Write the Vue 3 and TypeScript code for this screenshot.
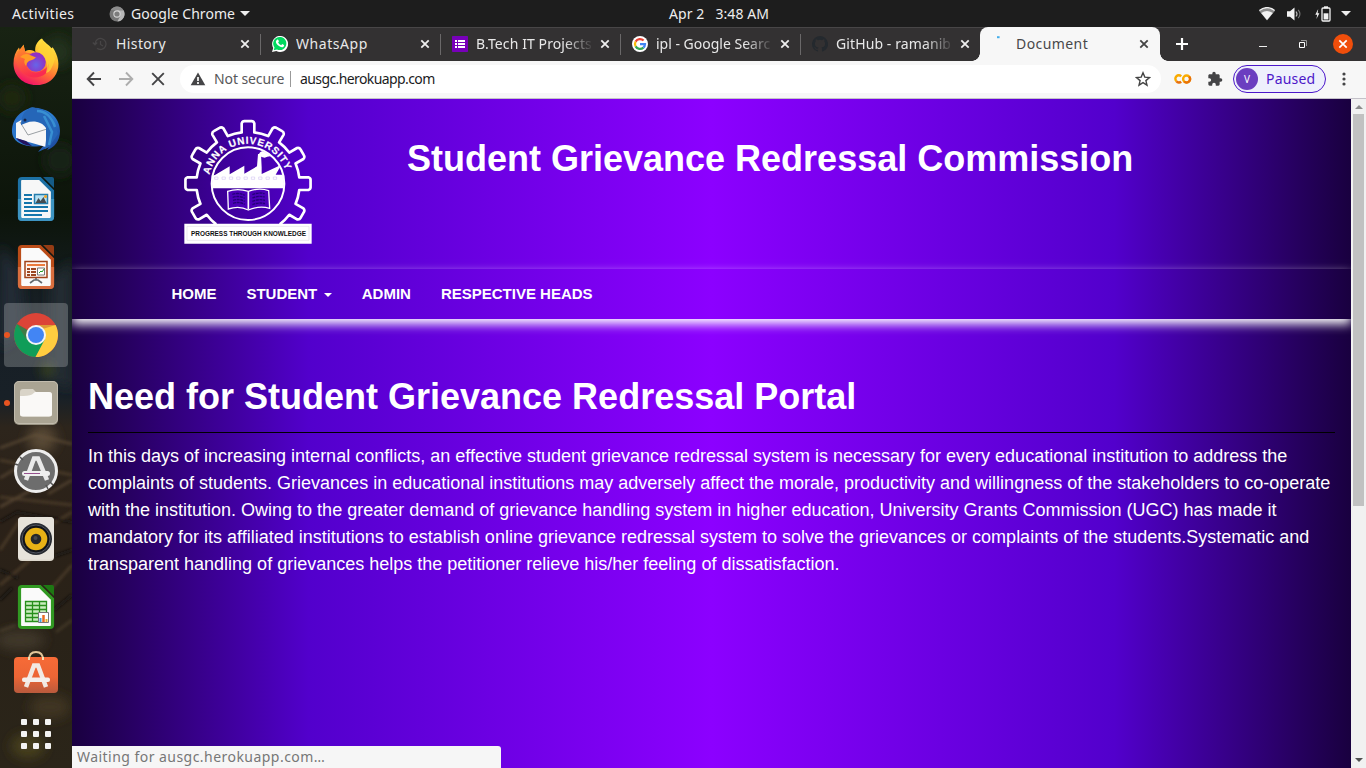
<script setup lang="ts">
interface Tab {
  id: string
  title: string
  active?: boolean
}

const tabs: Tab[] = [
  { id: 'history', title: 'History' },
  { id: 'whatsapp', title: 'WhatsApp' },
  { id: 'forms', title: 'B.Tech IT Projects' },
  { id: 'google', title: 'ipl - Google Searc' },
  { id: 'github', title: 'GitHub - ramanib' },
  { id: 'document', title: 'Document', active: true },
]

const navItems = [
  { label: 'HOME', menu: false },
  { label: 'STUDENT', menu: true },
  { label: 'ADMIN', menu: false },
  { label: 'RESPECTIVE HEADS', menu: false },
]

// Nine gear teeth, one every 30 degrees, open at the bottom where the banner sits.
function gearPath(): string {
  const pt = (r: number, deg: number) => {
    const a = (deg * Math.PI) / 180
    return `${(234 + r * Math.cos(a)).toFixed(1)} ${(236 + r * Math.sin(a)).toFixed(1)}`
  }
  let d = `M${pt(155, -232)}`
  for (let k = -7; k <= 1; k++) {
    const c = k * 30
    d += ` A155 155 0 0 1 ${pt(155, c - 7)} L${pt(182, c - 6)} Q${pt(189, c - 5)} ${pt(188, c - 3)}`
    d += ` L${pt(188, c + 3)} Q${pt(189, c + 5)} ${pt(182, c + 6)} L${pt(155, c + 7)}`
  }
  return d + ` A155 155 0 0 1 ${pt(155, 52)}`
}
const gear = gearPath()

const gridDots = [0, 1, 2, 3, 4, 5, 6, 7, 8].map((i) => ({
  x: 21 + (i % 3) * 12,
  y: 10 + Math.floor(i / 3) * 12,
}))
</script>

<template>
  <div class="desktop">
    <header class="topbar">
      <span class="activities">Activities</span>
      <span class="appmenu">
        <svg width="16" height="16" viewBox="0 0 16 16">
          <circle cx="8" cy="8" r="7.5" fill="#777" />
          <path d="M8 4.2h6.6A7.5 7.5 0 0 1 8.4 15.5L11.3 10z" fill="#b8b8b8" />
          <path d="M1.7 4A7.5 7.5 0 0 1 14.5 4.3H8z" fill="#8d8d8d" />
          <circle cx="8" cy="8" r="3.7" fill="#d5d5d5" />
          <circle cx="8" cy="8" r="2.6" fill="#7c7c7c" />
        </svg>
        <span class="appname">Google Chrome</span>
        <i class="tri"></i>
      </span>
      <span class="clock">Apr 2&nbsp;&nbsp; 3:48 AM</span>
      <span class="tray">
        <svg width="16" height="14" viewBox="0 0 16 14">
          <path d="M0 3.8Q8-2.7 16 3.8L8 13.5z" fill="#8d8d8d" />
          <path d="M.3 3.5Q8-2.3 15.7 3.5" fill="none" stroke="#f2f2f2" stroke-width="1.3" />
          <path d="M2.2 6Q8 1.8 13.8 6L8 13z" fill="#f2f2f2" />
        </svg>
        <svg width="16" height="14" viewBox="0 0 16 14">
          <path d="M0 4.3h3L7.5.5v13L3 9.7H0z" fill="#f2f2f2" />
          <path d="M9 4.5q2 2.5 0 5" fill="none" stroke="#bbb" stroke-width="1.2" />
          <path d="M11.2 2.8q3.5 4.2 0 8.4" fill="none" stroke="#777" stroke-width="1.1" />
        </svg>
        <svg width="16" height="16" viewBox="0 0 16 16">
          <path d="M3.2 3 .3 8.8h1.9L1.4 13l3-5.8H2.6z" fill="#f2f2f2" />
          <path d="M9 .3h4v2H9z" fill="#f2f2f2" />
          <rect x="7" y="2" width="8" height="13" rx="1" fill="none" stroke="#f2f2f2" stroke-width="1.3" />
          <path d="M8.600 7.300h4.800v6.200H8.600z" fill="#f2f2f2" />
        </svg>
        <i class="tri"></i>
      </span>
    </header>

    <div class="workspace">
      <aside class="dock">
        <svg class="wallpaper" width="72" height="741" viewBox="0 27 72 741">
          <defs>
            <linearGradient id="wp" x1="0" y1="0" x2="0" y2="1">
              <stop offset="0" stop-color="#182313" />
              <stop offset=".25" stop-color="#0c140a" />
              <stop offset=".38" stop-color="#171f25" />
              <stop offset=".5" stop-color="#182027" />
              <stop offset=".54" stop-color="#2d251c" />
              <stop offset=".66" stop-color="#2b2118" />
              <stop offset=".82" stop-color="#292218" />
              <stop offset="1" stop-color="#2b2519" />
            </linearGradient>
            <filter id="soft" x="-50%" y="-50%" width="200%" height="200%"><feGaussianBlur stdDeviation="6" /></filter>
            <filter id="fine" x="-50%" y="-50%" width="200%" height="200%"><feGaussianBlur stdDeviation="1.8" /></filter>
          </defs>
          <path fill="url(#wp)" d="M0 27h72v741H0z" />
          <g filter="url(#soft)">
            <circle cx="58" cy="52" r="15" fill="#22301a" />
            <circle cx="12" cy="98" r="14" fill="#1a2711" />
            <circle cx="60" cy="160" r="16" fill="#182412" />
            <path d="M0 245 20 270 25 330 0 350z" fill="#222c34" />
            <path d="M50 280 72 260V390L48 380z" fill="#202a32" />
            <circle cx="47" cy="370" r="6" fill="#414c16" />
            <circle cx="42" cy="439" r="14" fill="#594936" />
            <ellipse cx="20" cy="640" rx="25" ry="10" fill="#40382a" />
            <ellipse cx="50" cy="707" rx="20" ry="12" fill="#413622" />
            <ellipse cx="28" cy="746" rx="17" ry="12" fill="#46401d" />
          </g>
          <g filter="url(#fine)" fill="none" stroke-width="2.600">
            <path d="M0 448 35 435 72 444M0 478 22 465M48 494 72 480M0 507 35 488" stroke="#65523c" opacity=".65" />
            <path d="M0 460 72 475M0 497 72 505M0 550 20 520M54 523 72 512M0 585 30 560M50 590 72 565" stroke="#594630" opacity=".7" />
            <path d="M0 522 17 512 72 522M55 556 72 550M0 570 18 578M0 600 12 588M54 610 72 595" stroke="#110f0e" opacity=".8" />
            <path d="M0 631 16 625M56 632 72 620" stroke="#6a5b3b" opacity=".4" />
          </g>
        </svg>

        <div class="launcher">
          <svg width="72" height="68" viewBox="0 0 72 68">
            <defs>
              <linearGradient id="ffo" x1=".8" y1="0" x2=".3" y2="1">
                <stop offset="0" stop-color="#fff24a" /><stop offset=".35" stop-color="#ffbd2f" />
                <stop offset=".65" stop-color="#ff6b35" /><stop offset="1" stop-color="#f20b6c" />
              </linearGradient>
              <linearGradient id="ffr" x1="0" y1="0" x2=".3" y2="1">
                <stop offset="0" stop-color="#ff9424" /><stop offset="1" stop-color="#fa2b50" />
              </linearGradient>
              <radialGradient id="ffp" cx=".5" cy=".65"><stop offset="0" stop-color="#6566e8" /><stop offset="1" stop-color="#9131c5" /></radialGradient>
            </defs>
            <path d="M42 9.500c2.400 4.200 6.400 5.600 9.500 9.800l1.200-1.100c5.200 7.500 8 18.400 3.500 26.500C52 52.500 45 56.200 36 56 23 56 13.500 46.500 13.500 34.500 13.500 28 15.500 22.500 19 18.500L20 22l3.500-6.500 1.500 7C29 20 34 21 35.500 23.500 34 17 38 11 42 9.500z" fill="url(#ffo)" />
            <path d="M17.500 23 23.500 16l2 7.500C29 24 35 25 36 28L31.500 31c-3 2-5.500 3-4.500 6 1 6 9 8 14 5 5-2 7-5 8-8 1 13-12 17-21 13-9-3-13-13-10.500-24z" fill="url(#ffr)" />
            <circle cx="36" cy="33" r="9.800" fill="url(#ffp)" />
            <path d="M20 28q5-5 10-2l6 2.500q-2 2-7 3.500-3 2-3 5-3-4-1-7z" fill="#ff9c25" />
            <path d="M37 22q5-6 5-12 2 5 9 10l4 10q-4 14-9 14Q50 29 37 22z" fill="#ffd436" opacity=".75" />
          </svg>
        </div>

        <div class="launcher">
          <svg width="72" height="68" viewBox="0 0 72 68">
            <defs><linearGradient id="tb" x1="0" y1="0" x2="1" y2="1"><stop offset="0" stop-color="#2869c4" /><stop offset=".5" stop-color="#2d7fd2" /><stop offset="1" stop-color="#183d91" /></linearGradient></defs>
            <path d="M29 11.500Q33 9 37 12C50 11 60 22 60 34c0 10-6 17-13 19l2-3-11 5 6-7C32 52 15 48 12.500 38 10 26 18 15 29 11.500z" fill="url(#tb)" />
            <path d="M16 26 23 22 46 26 49 33 46 50 25 44 16 41z" fill="#f7f7f7" />
            <path d="m20 25 8 13 19-6" fill="none" stroke="#9aa0a4" />
            <path d="M21 28c0-8 3-15 10-17 12-2 22 6 24 17l3 9-9 13-4 2 1-9V31c-4-6-12-8-20-5z" fill="#2566b8" />
            <path d="M37 14c9 0 15 7 18 16M44 19l8 16-3 13" fill="none" stroke="#388fd2" stroke-width="2.500" />
            <path d="m16 41 10 3 6 5q-11-1-16-8z" fill="#23135f" />
            <circle cx="25" cy="23" r="1.500" fill="#172447" />
          </svg>
        </div>

        <div class="launcher">
          <svg width="72" height="68" viewBox="0 0 72 68">
            <path d="M43 12h9q2 0 2 2v9z" fill="#155b87" />
            <path d="M22 13.500h18l12.500 12.500v26q0 2.500-2.500 2.500H22q-2.500 0-2.500-2.500V16q0-2.500 2.500-2.500z" fill="#f7f7f7" stroke="#1d71a5" stroke-width="3.200" />
            <path d="M19.500 34v18q0 2.500 2.500 2.500h28q2.500 0 2.500-2.500V34" fill="none" stroke="#3d94c2" stroke-width="3.200" />
            <path d="M24 30h8m-8 4h8m-8 4h8m-8 4h24m-24 4h24m-24 4h18" stroke="#1476ac" stroke-width="2" />
            <path d="M34.500 29.500h13v9h-13z" fill="#b5e1f4" stroke="#257dac" stroke-width="1.500" />
            <path d="m35.500 38 3-5 2 3 3-4 3 6z" fill="#454c50" /><circle cx="45.500" cy="31.500" r="1.500" fill="#f0a324" />
          </svg>
        </div>

        <div class="launcher">
          <svg width="72" height="68" viewBox="0 0 72 68">
            <path d="M43 12h9q2 0 2 2v9z" fill="#963c14" />
            <path d="M22 13.500h18l12.500 12.500v26q0 2.500-2.500 2.500H22q-2.500 0-2.500-2.500V16q0-2.500 2.500-2.500z" fill="#fafafa" stroke="#bb4c18" stroke-width="3.200" />
            <path d="M19.500 34v18q0 2.500 2.500 2.500h28q2.500 0 2.500-2.500V34" fill="none" stroke="#d96e3e" stroke-width="3.200" />
            <path d="M25 28.500h22v16H25z" fill="#fff5ef" stroke="#a24319" stroke-width="1.500" />
            <path d="M27 32h18" stroke="#ec7b3d" stroke-width="2" />
            <path d="M27 36h3m1 0h5m-9 3h3m1 0h5m-9 3h3m1 0h5" stroke="#9c4722" stroke-width="2" />
            <path d="M37.500 35h7v7h-7z" fill="#fff" stroke="#777" /><path d="m39 40 2-2 1 1 2-3" stroke="#249a24" fill="none" />
            <path d="M36 45v2m-6 3 4-3h4l4 3" stroke="#62686c" stroke-width="1.700" fill="none" />
          </svg>
        </div>

        <div class="launcher selected running">
          <svg width="72" height="68" viewBox="0 0 72 68">
            <circle cx="36" cy="34" r="22" fill="#dc4437" />
            <path d="M17 23A22 22 0 0 0 35.500 56L46 38.500 36 34z" fill="#109d58" />
            <path d="M36 24h19.600A22 22 0 0 1 35.500 56L45 38z" fill="#ffcd40" />
            <path d="M17 22.700 26 38l2-9zM36 24h19.600l-13 4z" fill="#9d3c25" opacity=".35" />
            <circle cx="36" cy="34" r="10" fill="#f4f4f4" /><circle cx="36" cy="34" r="8" fill="#4285f4" />
          </svg>
        </div>

        <div class="launcher running">
          <svg width="72" height="68" viewBox="0 0 72 68">
            <rect x="14" y="12" width="44" height="44" rx="5" fill="#999382" />
            <rect x="14.500" y="12.500" width="43" height="42" rx="4.500" fill="#aaa493" stroke="#c2bcae" />
            <path d="M20 23q0-3 3-3h10l3 3h13q3 0 3 3v19q0 2.500-3 2.500H23q-3 0-3-2.500z" fill="#d9d4c8" />
            <path d="M20 27q8 0 12-1.500l3-2.500h14q3 0 3 3v19q0 2.500-3 2.500H23q-3 0-3-2.500z" fill="#faf9f7" />
          </svg>
        </div>

        <div class="launcher">
          <svg width="72" height="68" viewBox="0 0 72 68">
            <circle cx="36" cy="34" r="20.500" fill="#6d6d6d" stroke="#eee" stroke-width="3" />
            <path d="m20 20 3 3m-8 4 3 1m32 17 3 3m-7 0 2 4" stroke="#555" stroke-width="1.500" />
            <path d="M26 43 34 21.500h4L47 43" fill="none" stroke="#e9e9e9" stroke-width="4.500" />
            <rect x="22" y="34" width="28" height="5" rx="2.500" fill="#efefef" /><path d="M24 36.500h16" stroke="#95508d" />
          </svg>
        </div>

        <div class="launcher">
          <svg width="72" height="68" viewBox="0 0 72 68">
            <rect x="18" y="12" width="36" height="44" rx="4" fill="#ded9ce" />
            <rect x="18" y="12" width="36" height="42.500" rx="4" fill="#e7e3db" />
            <circle cx="36" cy="34" r="16" fill="#272a31" /><circle cx="36" cy="34" r="14" fill="#111319" stroke="#515561" />
            <circle cx="36" cy="34" r="11.300" fill="#e8b116" /><circle cx="36" cy="34" r="5.300" fill="#25262b" /><circle cx="35.500" cy="33" r="2" fill="#45474c" />
          </svg>
        </div>

        <div class="launcher">
          <svg width="72" height="68" viewBox="0 0 72 68">
            <path d="M43 12h9q2 0 2 2v9z" fill="#1e7813" />
            <path d="M22 13.500h18l12.500 12.500v26q0 2.500-2.500 2.500H22q-2.500 0-2.500-2.500V16q0-2.500 2.500-2.500z" fill="#fafafa" stroke="#319922" stroke-width="3.200" />
            <path d="M25.500 28.500h21v20h-21zm0 4h21m-21 4h21m-21 4h21m-21 4h21m-14-16v20m7-20v20" fill="#c8edbc" stroke="#278f1b" stroke-width="1.300" />
            <path d="M38.500 39.500h10v10h-10z" fill="#fff" stroke="#777" /><path d="M40.500 49v-4" stroke="#42a0e0" stroke-width="2" /><path d="M43.500 49v-7" stroke="#e96c22" stroke-width="2.500" /><path d="M46.500 49v-3" stroke="#e4b52b" stroke-width="2" />
          </svg>
        </div>

        <div class="launcher">
          <svg width="72" height="68" viewBox="0 0 72 68">
            <defs><linearGradient id="store" x1="0" y1="0" x2="0" y2="1"><stop offset="0" stop-color="#f76b37" /><stop offset=".55" stop-color="#ec6535" /><stop offset="1" stop-color="#b95a3d" /></linearGradient></defs>
            <path d="M29 19q0-8 7-8t7 8" fill="none" stroke="#e2c69a" stroke-width="2" />
            <rect x="14" y="16" width="44" height="36" rx="4" fill="url(#store)" />
            <path d="M29 16v3m14-3v3" stroke="#f4dfb3" stroke-width="2" />
            <path d="M26 46 34 24.500h4L46 46" fill="none" stroke="#f1e9e3" stroke-width="4.500" />
            <rect x="22" y="36.500" width="28" height="4.500" rx="2" fill="#f5efeb" />
          </svg>
        </div>

        <div class="launcher grid-launcher">
          <svg width="72" height="59" viewBox="0 0 72 59">
            <rect v-for="(d, i) in gridDots" :key="i" :x="d.x" :y="d.y" width="6" height="6" rx="1" fill="#f4f4f2" />
          </svg>
        </div>
      </aside>

      <section class="window">
        <div class="tabstrip">
          <div v-for="tab in tabs" :key="tab.id" class="tab" :class="[tab.id, { active: tab.active }]">
            <svg class="favicon" width="16" height="16" viewBox="0 0 16 16">
              <g v-if="tab.id === 'history'" fill="none" stroke="#474546" stroke-width="1.300">
                <path d="M3 8a5.500 5.500 0 1 1 2 4.200M.8 6.500 3 8.800l2.200-2.300M8.500 5v3.500l2.500 1.500" />
              </g>
              <g v-else-if="tab.id === 'whatsapp'">
                <path d="M0 16 1.200 12A8 8 0 1 1 4.300 15z" fill="#fff" />
                <path d="m1.700 14.300.8-2.800A6.600 6.600 0 1 1 5 13.500z" fill="#00d95f" />
                <path d="M5 3.800c.6-.5 1.200-.3 1.400.3l.5 1.300-.8 1q1 2 3.100 2.900l1-1.200 1.800.9c.4.200 0 1.800-1.300 2.200C8 12 3 7.300 4 5z" fill="#fff" />
              </g>
              <g v-else-if="tab.id === 'forms'">
                <rect width="16" height="16" rx=".7" fill="#7800b9" />
                <path d="M3 5h2m1 0h7M3 8h2m1 0h7M3 11h2m1 0h7" stroke="#fff" stroke-width="2" />
              </g>
              <g v-else-if="tab.id === 'google'">
                <circle cx="8" cy="8" r="8" fill="#fff" />
                <g fill="none" stroke-width="2.200">
                  <path d="M11.600 4.600A5 5 0 0 0 3.600 5.600" stroke="#ea4335" />
                  <path d="M3.600 5.600A5 5 0 0 0 3.600 10.400" stroke="#fbbc05" />
                  <path d="M3.600 10.400A5 5 0 0 0 11.400 11.600" stroke="#34a853" />
                  <path d="M11.400 11.600A5 5 0 0 0 13 8.100H8" stroke="#4285f4" />
                </g>
              </g>
              <path v-else-if="tab.id === 'github'" fill="#24292e" d="M8 0a8 8 0 0 0-2.530 15.590c.4.070.55-.17.55-.38v-1.490c-2.230.48-2.700-.94-2.700-.94-.36-.92-.89-1.170-.89-1.170-.73-.5.050-.49.050-.49.800.06 1.230.83 1.230.83.710 1.220 1.870.87 2.330.66.070-.52.280-.87.500-1.070-1.770-.2-3.640-.89-3.640-3.950 0-.87.310-1.590.82-2.150-.08-.2-.36-1.020.08-2.120 0 0 .67-.21 2.200.82a7.600 7.600 0 0 1 4 0c1.530-1.040 2.200-.82 2.200-.82.440 1.100.16 1.920.08 2.120.51.560.82 1.270.82 2.150 0 3.070-1.870 3.750-3.650 3.950.290.250.540.730.540 1.480v2.200c0 .210.150.460.550.380A8 8 0 0 0 8 0z" />
              <path v-else d="M5 1.200h2.600" stroke="#45aeea" stroke-width="2" />
            </svg>
            <span class="title">{{ tab.title }}</span>
            <svg class="close" width="10" height="10" viewBox="0 0 10 10"><path d="m1.300 1.300 7.400 7.400m0-7.400L1.300 8.700" /></svg>
          </div>
          <svg class="newtab" width="14" height="14" viewBox="0 0 14 14"><path d="M7 1v12M1 7h12" stroke="#fff" stroke-width="2.200" /></svg>
          <div class="winbuttons">
            <svg width="10" height="10" viewBox="0 0 10 10"><path d="M1 7.500h8" stroke="#eee" /></svg>
            <svg width="10" height="10" viewBox="0 0 10 10" fill="none"><path d="M3 1.500h5.500V7" stroke="#999" /><path d="M1.500 3.500h5v5h-5z" stroke="#fff" /></svg>
            <span class="winclose"><svg width="10" height="10" viewBox="0 0 10 10"><path d="m1.300 1.300 7.400 7.400m0-7.400L1.300 8.700" stroke="#fff" stroke-width="1.700" /></svg></span>
          </div>
        </div>

        <div class="toolbar">
          <div class="navbuttons">
            <svg width="16" height="16" viewBox="0 0 16 16" fill="none" stroke="#434345" stroke-width="1.900"><path d="M15 8H2M8 1.500 1.700 8 8 14.500" /></svg>
            <svg width="16" height="16" viewBox="0 0 16 16" fill="none" stroke="#adadad" stroke-width="1.900"><path d="M1 8h13M8 1.500 14.300 8 8 14.500" /></svg>
            <svg width="16" height="16" viewBox="0 0 16 16" fill="none" stroke="#434345" stroke-width="1.900"><path d="m2.200 2.200 11.600 11.600m0-11.600L2.200 13.800" /></svg>
          </div>
          <div class="omnibox">
            <svg width="16" height="14" viewBox="0 0 16 14"><path d="M8 .5 15.300 13.300H.7z" fill="#454547" /><path d="M8 5v4m0 1v2" stroke="#fff" stroke-width="1.700" /></svg>
            <span class="insecure">Not secure</span>
            <i class="bar"></i>
            <span class="url">ausgc.herokuapp.com</span>
            <svg class="star" width="16" height="16" viewBox="0 0 16 16"><path d="m8 1.800 1.800 4.300 4.700.4-3.600 3.100 1.100 4.600-4-2.500-4 2.500 1.100-4.600-3.600-3.100 4.700-.4z" fill="none" stroke="#444" stroke-width="1.400" /></svg>
          </div>
          <svg class="colab" width="18" height="12" viewBox="0 0 18 12" fill="none" stroke-width="2.400">
            <path d="M7.200 3.300A3.400 3.400 0 0 0 2.400 8.200" stroke="#f9ab00" /><path d="M2.400 8.200A3.400 3.400 0 0 0 7.200 8.700" stroke="#e8710a" />
            <circle cx="12.600" cy="6" r="3.500" stroke="#f9ab00" /><path d="M10.100 8.500A3.500 3.500 0 0 0 15.100 3.500" stroke="#e8710a" />
          </svg>
          <svg class="puzzle" width="16" height="16" viewBox="0 0 24 24"><path fill="#444446" d="M20.500 11H19V7c0-1.100-.9-2-2-2h-4V3.500a2.500 2.500 0 0 0-5 0V5H4c-1.100 0-2 .9-2 2v3.800h1.500a2.700 2.700 0 0 1 0 5.400H2V20c0 1.100.9 2 2 2h3.800v-1.500a2.700 2.700 0 0 1 5.400 0V22H17c1.100 0 2-.9 2-2v-4h1.500a2.500 2.500 0 0 0 0-5z" /></svg>
          <div class="profile"><span class="avatar">V</span><span class="paused">Paused</span></div>
          <svg class="kebab" width="4" height="16" viewBox="0 0 4 16" fill="#444446"><circle cx="2" cy="3" r="1.600" /><circle cx="2" cy="8" r="1.600" /><circle cx="2" cy="13" r="1.600" /></svg>
        </div>

        <div class="viewport">
          <main class="page">
            <div class="masthead">
              <svg class="crest" width="160" height="150" viewBox="0 0 480 450">
                <defs>
                  <path id="arc" d="M118 209A119 119 0 0 1 350 209" />
                  <clipPath id="disc"><circle cx="234" cy="236" r="108" /></clipPath>
                </defs>
                <path :d="gear" fill="none" stroke="#fff" stroke-width="8" stroke-linejoin="round" />
                <circle cx="234" cy="236" r="109" fill="none" stroke="#fff" stroke-width="6" />
                <text class="crest-name"><textPath href="#arc" textLength="306" lengthAdjust="spacing">ANNA UNIVERSITY</textPath></text>
                <g clip-path="url(#disc)">
                  <path d="M120 250V212l15-2 44-26v24l44-26v24l38-22 3-37h9l2 40v20l59-28-17 30h40v41z" fill="#fff" />
                  <path d="M266 150q3-12 15-12 12 6 25 4 8 5 0 12-12-2-22 4-9 0-18-8z" fill="#fff" />
                  <path d="M134 216h10v7h-10zm22 0h10v7h-10zm22 0h10v7h-10zm22 0h10v7h-10zm22 0h10v7h-10zm22 0h10v7h-10zm22 0h10v7h-10zm22 0h10v7h-10zm22 0h10v7h-10z" fill="none" stroke="#c9b8ef" stroke-width="1.500" />
                </g>
                <path d="M173 259q30-10 62 0 33-12 61-2l3 53q-31-9-64 5-27-14-60-3z" fill="#4c00b8" stroke="#fff" stroke-width="4" />
                <path d="M235 260v53" stroke="#fff" stroke-width="5" />
                <path d="M187 268q20-6 37 3M188 277q19-6 36 3M189 286q18-6 35 3M189 295q18-6 35 3M247 269q19-8 37-3M247 279q19-8 37-3M247 289q19-8 38-3M247 299q19-8 38-3" stroke="#240078" stroke-width="4" fill="none" stroke-dasharray="9 2" />
                <path d="M43 356h382v60H43z" fill="#fff" />
                <path d="M51 364h366v42H51z" fill="none" stroke="#d6d2df" stroke-width="1.500" />
                <text class="crest-motto" x="63" y="394" textLength="345" lengthAdjust="spacingAndGlyphs">PROGRESS THROUGH KNOWLEDGE</text>
              </svg>
              <h1>Student Grievance Redressal Commission</h1>
            </div>
            <nav class="menu">
              <a v-for="item in navItems" :key="item.label">{{ item.label }}<i v-if="item.menu" class="caret"></i></a>
            </nav>
            <article>
              <h2>Need for Student Grievance Redressal Portal</h2>
              <hr />
              <p>In this days of increasing internal conflicts, an effective student grievance redressal system is necessary for every educational institution to address the complaints of students. Grievances in educational institutions may adversely affect the morale, productivity and willingness of the stakeholders to co-operate with the institution. Owing to the greater demand of grievance handling system in higher education, University Grants Commission (UGC) has made it mandatory for its affiliated institutions to establish online grievance redressal system to solve the grievances or complaints of the students.Systematic and transparent handling of grievances helps the petitioner relieve his/her feeling of dissatisfaction.</p>
            </article>
          </main>
          <div class="scrollbar">
            <i class="up"></i>
            <span class="thumb"></span>
            <i class="down"></i>
          </div>
          <div class="status">Waiting for ausgc.herokuapp.com…</div>
        </div>
      </section>
    </div>
  </div>
</template>

<style>
html,
body {
  margin: 0;
  overflow: hidden;
}
</style>

<style scoped>
.desktop {
  width: 1366px;
  height: 768px;
  display: flex;
  flex-direction: column;
  overflow: hidden;
  background: #1d1d1d;
  font-family: "Noto Sans", "Open Sans", sans-serif;
  font-size: 14px;
}
svg { display: block; flex: none; }
.topbar {
  height: 27px;
  flex: none;
  display: grid;
  grid-template-columns: 109px 560px 110px 1fr;
  align-items: center;
  color: #eee;
  line-height: 26px;
  white-space: nowrap;
}
.activities { padding-left: 12px; letter-spacing: .4px; }
.appmenu { display: flex; align-items: center; }
.appname { margin: 0 5px 0 6px; letter-spacing: .05px; }
.tri { border: 5px solid transparent; border-top: 5px solid #eee; border-bottom: 0; }
.clock { letter-spacing: .07px; }
.tray { display: flex; align-items: center; justify-content: flex-end; padding-right: 15px; }
.tray svg { margin-right: 12px; }
.tray svg:nth-child(3) { margin-right: 10px; }

.workspace { flex: 1; display: flex; min-height: 0; }
.dock {
  width: 72px;
  flex: none;
  position: relative;
  padding-top: 2px;
  box-sizing: border-box;
  overflow: hidden;
}
.wallpaper { position: absolute; left: 0; top: 0; }
.launcher { position: relative; height: 68px; }
.selected::before {
  content: "";
  position: absolute;
  left: 4px;
  top: 2px;
  width: 64px;
  height: 64px;
  border-radius: 4px;
  background: rgba(255, 255, 255, .22);
}
.launcher svg { position: relative; }
.running::after {
  content: "";
  position: absolute;
  left: 4px;
  top: 31px;
  width: 6px;
  height: 6px;
  border-radius: 50%;
  background: #e95420;
}
.grid-launcher { height: 59px; }

.window { flex: 1; min-width: 0; display: flex; flex-direction: column; }
.tabstrip {
  height: 34px;
  flex: none;
  display: flex;
  align-items: center;
  padding-left: 8px;
  box-sizing: border-box;
  background: #333132;
  border-top: 1px solid #484647;
}
.tab {
  width: 180px;
  height: 34px;
  margin-top: -1px;
  flex: none;
  display: flex;
  align-items: center;
  box-sizing: border-box;
  padding-left: 12px;
  position: relative;
  color: #e8e8e8;
}
.tab::after {
  content: "";
  position: absolute;
  right: -1px;
  top: 7px;
  width: 1px;
  height: 21px;
  background: #6a6869;
}
.github::after { display: none; }
.title {
  width: 118px;
  margin-left: 8px;
  overflow: hidden;
  white-space: nowrap;
  line-height: 20px;
  letter-spacing: .1px;
}
.history .title { letter-spacing: .4px; }
.whatsapp .title { letter-spacing: .55px; }
.document .title { letter-spacing: .42px; }
.google .title { letter-spacing: 0; }
.forms .title, .google .title, .github .title {
  -webkit-mask-image: linear-gradient(to right, #000 75%, transparent);
  mask-image: linear-gradient(to right, #000 75%, transparent);
}
.close { margin-left: 6px; stroke: #eee; stroke-width: 1.8; }
.active { background: #f7f7f7; color: #48484a; border-radius: 8px 8px 0 0; }
.active .close { stroke: #444; margin-left: 5px; }
.tab.active::after {
  right: -8px;
  top: auto;
  bottom: 0;
  width: 8px;
  height: 8px;
  background: radial-gradient(circle at 100% 0, transparent 7.5px, #f7f7f7 8px);
}
.active::before {
  content: "";
  position: absolute;
  left: -8px;
  bottom: 0;
  width: 8px;
  height: 8px;
  background: radial-gradient(circle at 0 0, transparent 7.5px, #f7f7f7 8px);
}
.newtab { margin-left: 15px; margin-top: -1px; }
.winbuttons { display: flex; align-items: center; margin-left: auto; margin-right: 13px; margin-top: -1px; gap: 30px; }
.winclose {
  width: 20px;
  height: 20px;
  margin-left: -5px;
  border-radius: 50%;
  background: #f04e0b;
  display: flex;
  align-items: center;
  justify-content: center;
}
.toolbar {
  height: 38px;
  flex: none;
  display: flex;
  align-items: center;
  box-sizing: border-box;
  padding: 0 20px 1px 14px;
  background: #f7f7f7;
  border-bottom: 1px solid #c4c1c9;
}
.navbuttons { display: flex; gap: 16px; width: 94px; flex: none; }
.omnibox {
  width: 981px;
  height: 28px;
  flex: none;
  border-radius: 14px;
  background: #fff;
  display: flex;
  align-items: center;
  box-sizing: border-box;
  padding: 0 10px;
  white-space: nowrap;
}
.insecure { width: 76px; margin-left: 8px; color: #58585a; letter-spacing: -.1px; line-height: 18px; margin-top: -1px; }
.bar { width: 1px; height: 16px; margin-right: 9px; background: #999; }
.url { color: #1b1b1d; letter-spacing: -.6px; line-height: 18px; margin-top: -1px; }
.star { margin-left: auto; }
.colab { margin-left: 13px; }
.puzzle { margin-left: 15px; }
.profile {
  width: 93px;
  height: 28px;
  flex: none;
  margin-left: 10px;
  box-sizing: border-box;
  display: flex;
  align-items: center;
  padding-left: 2px;
  border: 1px solid #4c17c9;
  border-radius: 14px;
  background: #eef0fc;
  color: #4c17c9;
}
.avatar {
  width: 22px;
  height: 22px;
  border-radius: 50%;
  background: #6b3ec0;
  color: #fff;
  font-size: 10px;
  line-height: 22px;
  text-align: center;
}
.paused { margin-left: 8px; letter-spacing: .2px; line-height: 18px; margin-top: -1px; }
.kebab { margin-left: 16px; }

.viewport { flex: 1; min-height: 0; display: flex; position: relative; }
.page {
  flex: 1;
  min-width: 0;
  overflow: hidden;
  background: linear-gradient(to right, #19003f, #5200cc 18.5%, #8c00ff 50%, #5200cc 81.5%, #19003f);
  color: #fff;
  font-family: "Liberation Sans", Arial, sans-serif;
}
.masthead { height: 170px; display: flex; box-sizing: border-box; padding: 6px 0 0 98px; }
.crest { overflow: visible; }
.crest-name { font: 700 30px "Liberation Sans", sans-serif; fill: #fff; stroke: #fff; stroke-width: .6; }
.crest-motto { font: 700 24px "Liberation Sans", sans-serif; fill: #111; }
h1 { margin: 34px 0 0 77px; font-size: 36px; line-height: 40px; white-space: nowrap; }
.menu {
  height: 50px;
  display: flex;
  align-items: center;
  box-sizing: border-box;
  padding: 0 0 2px 84.4px;
  box-shadow: 0 5px 10px #fff;
  font-size: 15px;
  font-weight: 700;
}
.menu a { padding: 0 15px; display: flex; align-items: center; }
.caret { border: 4px solid transparent; border-top-color: #fff; border-bottom: 0; margin-left: 6.5px; margin-top: 3px; }
article { padding: 58px 16px 0; }
h2 { margin: 0; font-size: 36px; line-height: 40px; }
hr { margin: 15px 0 10px; border: 0; height: 1px; background: #000; }
p { margin: 0; font-size: 18px; line-height: 27px; }
.scrollbar { width: 15px; flex: none; background: #f1f1f1; display: flex; flex-direction: column; align-items: center; }
.up, .down { border: 4px solid transparent; }
.up { border-bottom: 4px solid #8b8b8b; border-top: 0; margin-top: 6px; }
.down { border-top: 4px solid #505050; border-bottom: 0; margin-top: auto; margin-bottom: 6px; }
.thumb { width: 11px; height: 392px; margin-top: 5px; background: #c1c1c1; }
.status {
  position: absolute;
  left: 0;
  bottom: 0;
  width: 429px;
  height: 22px;
  box-sizing: border-box;
  padding-left: 5px;
  border-top-right-radius: 3px;
  background: #f6f6f6;
  color: #777;
  line-height: 22px;
  letter-spacing: .46px;
}
</style>
